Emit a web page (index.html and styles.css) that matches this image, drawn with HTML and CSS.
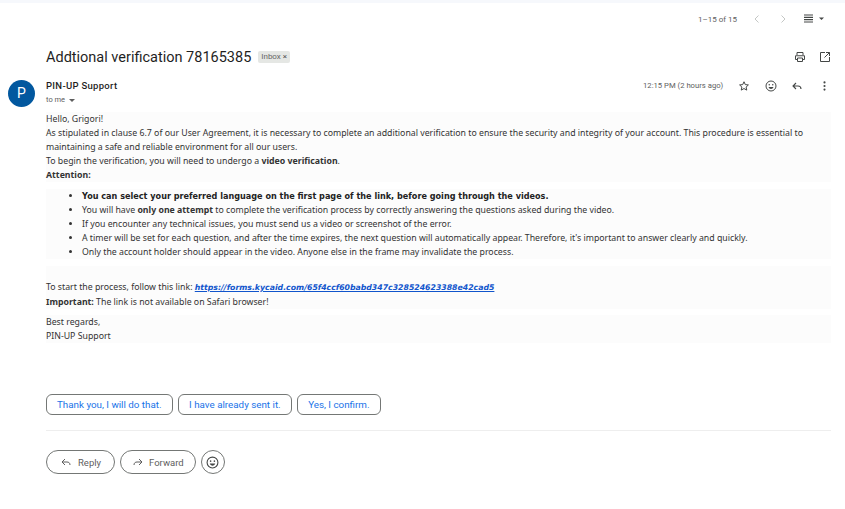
FILE: index.html
```html
<!DOCTYPE html>
<html lang="en">
<head>
<meta charset="utf-8">
<title>Addtional verification 78165385</title>
<link rel="stylesheet" href="styles.css">
</head>
<body>
<div class="strip"></div>
<div class="toolbar">
  <span class="count">1–15 of 15</span>
  <svg class="ico nav" viewBox="0 0 10 10" width="10" height="10"><path d="M6.5 1.5 3 5l3.500 3.500" fill="none" stroke="#c4c7c5" stroke-width="1"/></svg>
  <svg class="ico nav" viewBox="0 0 10 10" width="10" height="10"><path d="M3.500 1.500 7 5 3.500 8.500" fill="none" stroke="#c4c7c5" stroke-width="1"/></svg>
  <svg class="ico density" viewBox="0 0 24 10" width="24" height="10"><path d="M1 1h9M1 3.300h9M1 5.600h9M1 8h9" stroke="#444746" stroke-width="1.200"/><path d="M16 3.500h5L18.500 6z" fill="#444746"/></svg>
</div>
<div class="subject-row">
  <h1 class="subject">Addtional verification 78165385</h1>
  <span class="label">Inbox <b class="label-x">×</b></span>
  <span class="subject-actions">
    <svg viewBox="0 0 24 24" width="12" height="12"><path d="M6 8V3h12v5M6 17H3V9.500h18V17h-3M7 14h10v7H7z" fill="none" stroke="#444746" stroke-width="2"/></svg>
    <svg viewBox="0 0 24 24" width="12" height="12"><path d="M12 3H3v18h18v-9M14 3h7v7M21 3l-10 10" fill="none" stroke="#444746" stroke-width="2"/></svg>
  </span>
</div>
<main class="message">
  <div class="avatar">P</div>
  <div class="content">
    <header class="msg-head">
      <div>
        <div class="sender">PIN-UP Support</div>
        <div class="to">to me <svg viewBox="0 0 8 4" width="6" height="3"><path d="M0 0h8L4 4z" fill="#5e5e5e"/></svg></div>
      </div>
      <div class="meta">
        <span class="time">12:15 PM (2 hours ago)</span>
        <svg class="star" viewBox="0 0 24 24" width="12" height="12"><path d="M12 3.500l2.600 5.700 6.200.7-4.600 4.200 1.300 6.100L12 17.100l-5.500 3.100 1.300-6.100-4.600-4.200 6.200-.7z" fill="none" stroke="#444746" stroke-width="2"/></svg>
        <svg class="smile" viewBox="0 0 24 24" width="12" height="12"><circle cx="12" cy="12" r="10" fill="none" stroke="#444746" stroke-width="2"/><circle cx="8.500" cy="9.500" r="1.500" fill="#444746"/><circle cx="15.500" cy="9.500" r="1.500" fill="#444746"/><path d="M7 14h10c-.8 2.500-2.700 4-5 4s-4.200-1.500-5-4z" fill="#444746"/></svg>
        <svg class="reply-ico" viewBox="0 0 24 24" width="12" height="12"><path d="M10 6l-6 6 6 6M4 12h10c3.500 0 6 2 6 6" fill="none" stroke="#444746" stroke-width="2.200"/></svg>
        <svg class="more" viewBox="0 0 4 14" width="3" height="10"><circle cx="2" cy="2" r="1.500" fill="#444746"/><circle cx="2" cy="7" r="1.500" fill="#444746"/><circle cx="2" cy="12" r="1.500" fill="#444746"/></svg>
      </div>
    </header>
    <div class="body">
      <p class="block">Hello, Grigori!<br>
      As stipulated in clause 6.7 of our User Agreement, it is necessary to complete an additional verification to ensure the security and integrity of your account. This procedure is essential to maintaining a safe and reliable environment for all our users.<br>
      To begin the verification, you will need to undergo a <b>video verification</b>.<br>
      <b>Attention:</b></p>
      <ul class="block list">
        <li><b class="wide">You can select your preferred language on the first page of the link, before going through the videos.</b></li>
        <li>You will have <b>only one attempt</b> to complete the verification process by correctly answering the questions asked during the video.</li>
        <li>If you encounter any technical issues, you must send us a video or screenshot of the error.</li>
        <li>A timer will be set for each question, and after the time expires, the next question will automatically appear. Therefore, it's important to answer clearly and quickly.</li>
        <li>Only the account holder should appear in the video. Anyone else in the frame may invalidate the process.</li>
      </ul>
      <p class="block tight"><br>To start the process, follow this link: <a class="link" href="#">https://forms.kycaid.com/65f4ccf60babd347c328524623388e42cad5</a><br>
      <b>Important:</b> The link is not available on Safari browser!</p>
      <p class="block">Best regards,<br>PIN-UP Support</p>
    </div>
    <div class="smart">
      <button class="chip">Thank you, I will do that.</button>
      <button class="chip">I have already sent it.</button>
      <button class="chip">Yes, I confirm.</button>
    </div>
    <hr class="rule">
    <div class="actions">
      <button class="pill"><svg viewBox="0 0 24 24" width="12" height="12"><path d="M10 6l-6 6 6 6M4 12h10c3.500 0 6 2 6 6" fill="none" stroke="#5e5e5e" stroke-width="2"/></svg>Reply</button>
      <button class="pill pill-forward"><svg viewBox="0 0 24 24" width="12" height="12"><path d="M14 6l6 6-6 6M20 12H10c-3.500 0-6 2-6 6" fill="none" stroke="#5e5e5e" stroke-width="2"/></svg>Forward</button>
      <button class="round"><svg viewBox="0 0 24 24" width="13" height="13"><circle cx="12" cy="12" r="10" fill="none" stroke="#444746" stroke-width="2"/><circle cx="8.500" cy="9.500" r="1.500" fill="#444746"/><circle cx="15.500" cy="9.500" r="1.500" fill="#444746"/><path d="M7 14h10c-.8 2.500-2.700 4-5 4s-4.200-1.500-5-4z" fill="#444746"/></svg></button>
    </div>
  </div>
</main>
</body>
</html>
```
FILE: styles.css
```css
* { box-sizing: border-box; }
html, body { margin: 0; padding: 0; }
body {
  width: 845px;
  height: 509px;
  overflow: hidden;
  background: #fff;
  font-family: "Roboto", "Liberation Sans", sans-serif;
  color: #1f1f1f;
}
svg { display: block; flex: none; }
.strip { height: 3px; background: #f6f8fc; }
.toolbar {
  height: 31px;
  display: flex;
  align-items: center;
  padding: 1px 0 0 698px;
  font-size: 8px;
  color: #5e5e5e;
}
.count { width: 54px; }
.nav { margin-right: 17px; }
.nav + .nav { margin-left: -1px; margin-right: 15px; }
.subject-row {
  height: 36px;
  display: flex;
  align-items: center;
  padding: 10px 14px 0 46px;
}
.subject {
  margin: 0;
  font-size: 14.500px;
  font-weight: 400;
  white-space: nowrap;
  color: #1f1f1f;
}
.label {
  margin-left: 7px;
  height: 12px;
  padding: 0 3px;
  border-radius: 2px;
  background: #e5e7e4;
  color: #666;
  font-size: 8px;
  line-height: 12px;
  white-space: nowrap;
}
.label-x { font-weight: 400; color: #555; }
.subject-actions { margin-left: auto; display: flex; gap: 13px; }
.message { display: flex; padding: 10px 14px 0 8px; }
.avatar {
  width: 27px;
  height: 27px;
  border-radius: 50%;
  background: #02589f;
  color: #fff;
  font-size: 14px;
  line-height: 27px;
  text-align: center;
  flex: none;
  margin-right: 11px;
}
.content { flex: 1; min-width: 0; }
.msg-head { display: flex; justify-content: space-between; height: 32px; }
.sender { font-size: 9.500px; font-weight: 500; letter-spacing: .3px; line-height: 11px; color: #1f1f1f; }
.to { display: flex; align-items: center; gap: 4px; margin-top: 4px; font-size: 7.500px; line-height: 10px; color: #5e5e5e; }
.meta { display: flex; align-items: flex-start; padding-top: 0; padding-right: 5px; font-size: 7.700px; color: #5e5e5e; }
.time { line-height: 12px; width: 95px; }
.smile { margin-left: 15px; }
.reply-ico { margin-left: 14px; }
.more { margin-left: 20px; margin-top: 1px; }
.body { font-family: "Noto Sans", "Open Sans", sans-serif; font-size: 8.750px; line-height: 14px; color: #333; }
.block { margin: 0 0 7px; background: #fcfcfc; }
.tight { margin-bottom: 6px; }
.list { padding: 0 0 0 36px; list-style: disc; }
.wide { font-family: "DejaVu Sans", sans-serif; font-size: 8.120px; color: #222; }
.link { font-family: "DejaVu Sans", sans-serif; font-size: 7.770px; color: #1155cc; font-weight: 700; font-style: italic; }
.smart { display: flex; gap: 5.500px; margin-top: 51px; }
.chip {
  height: 21px;
  padding: 0 10px;
  border: 1px solid #747775;
  border-radius: 6px;
  background: #fff;
  color: #1a73e8;
  font-family: "Roboto", sans-serif;
  font-size: 9.800px;
  font-weight: 400;
}
.rule { margin: 15px 0 0; border: 0; border-top: 1px solid #eeeeee; }
.actions { display: flex; gap: 5px; margin-top: 19px; }
.pill {
  height: 24px;
  display: flex;
  align-items: center;
  gap: 6px;
  padding: 0 13px;
  border: 1px solid #747775;
  border-radius: 12px;
  background: #fff;
  color: #5e5e5e;
  font-family: "Roboto", sans-serif;
  font-size: 9.500px;
}
.pill-forward { gap: 5px; padding: 0 11px; }
.round {
  width: 24px;
  height: 24px;
  display: flex;
  align-items: center;
  justify-content: center;
  padding: 0;
  border: 1px solid #747775;
  border-radius: 50%;
  background: #fff;
}
```
